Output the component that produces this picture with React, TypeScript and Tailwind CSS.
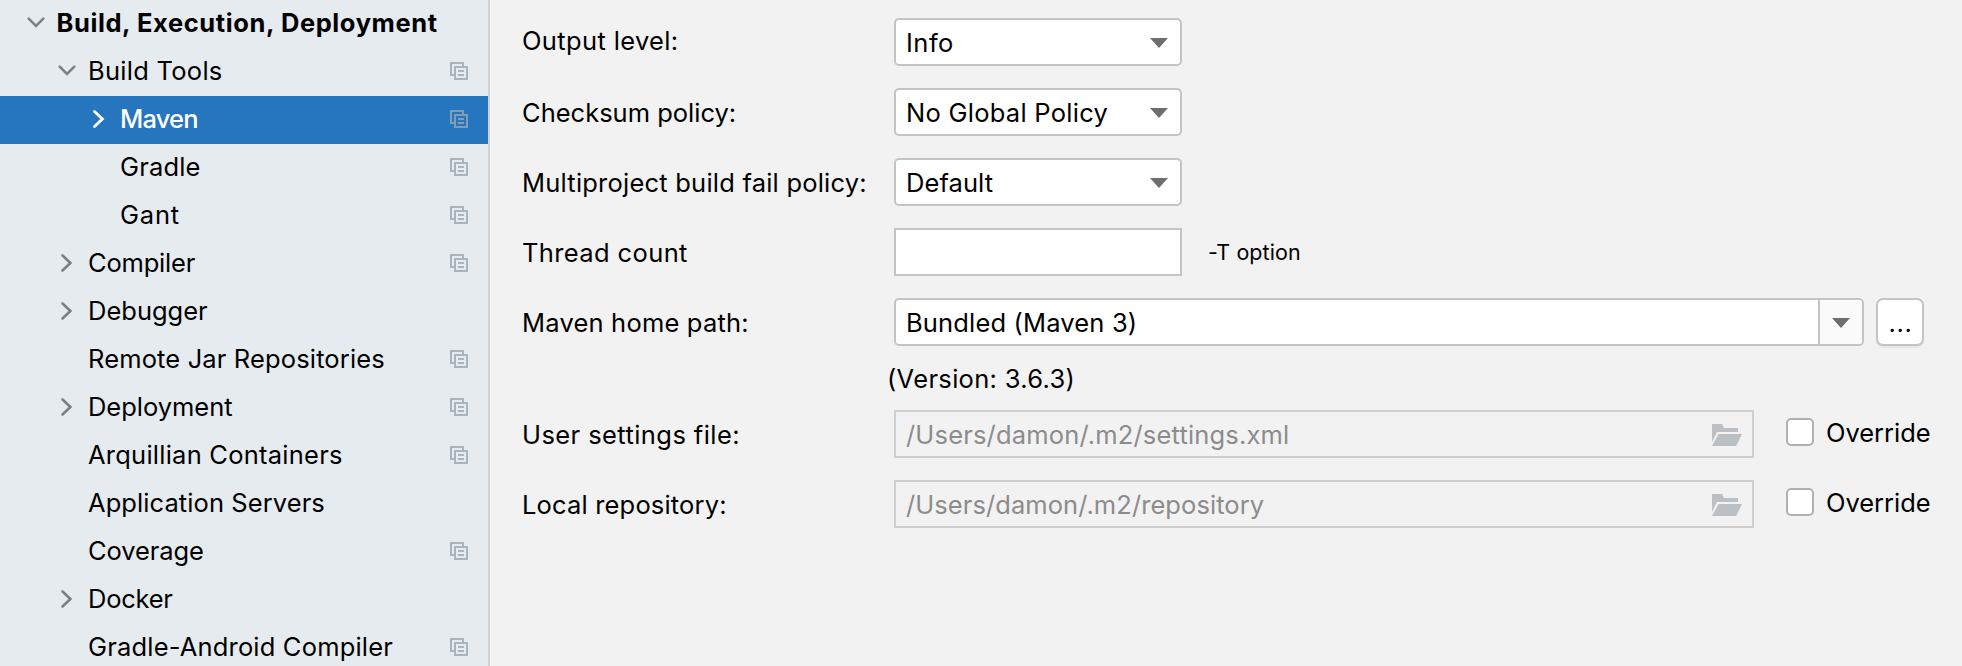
import type { ReactNode } from "react";

type Row = {
  label: string;
  indent: string;
  spacing: string;
  arrow?: "down" | "right";
  copy?: boolean;
  bold?: boolean;
  selected?: boolean;
};

const rows: Row[] = [
  { label: "Build, Execution, Deployment", indent: "pl-[24.5px]", spacing: "tracking-[0.59px]", arrow: "down", bold: true },
  { label: "Build Tools", indent: "pl-[56px]", spacing: "tracking-[0.27px]", arrow: "down", copy: true },
  { label: "Maven", indent: "pl-[88px]", spacing: "tracking-[-0.8px]", arrow: "right", copy: true, selected: true },
  { label: "Gradle", indent: "pl-[88px]", spacing: "tracking-[0.15px]", copy: true },
  { label: "Gant", indent: "pl-[88px]", spacing: "tracking-[0.8px]", copy: true },
  { label: "Compiler", indent: "pl-[56px]", spacing: "tracking-[-0.2px]", arrow: "right", copy: true },
  { label: "Debugger", indent: "pl-[56px]", spacing: "tracking-[0px]", arrow: "right" },
  { label: "Remote Jar Repositories", indent: "pl-[56px]", spacing: "tracking-[0.14px]", copy: true },
  { label: "Deployment", indent: "pl-[56px]", spacing: "tracking-[-0.03px]", arrow: "right", copy: true },
  { label: "Arquillian Containers", indent: "pl-[56px]", spacing: "tracking-[0.24px]", copy: true },
  { label: "Application Servers", indent: "pl-[56px]", spacing: "tracking-[0.08px]" },
  { label: "Coverage", indent: "pl-[56px]", spacing: "tracking-[-0.1px]", copy: true },
  { label: "Docker", indent: "pl-[56px]", spacing: "tracking-[-0.25px]", arrow: "right" },
  { label: "Gradle-Android Compiler", indent: "pl-[56px]", spacing: "tracking-[0.18px]", copy: true },
];

function Chevron({ dir, selected }: { dir?: "down" | "right"; selected?: boolean }) {
  return (
    <svg
      className={`h-[48px] w-[32px] shrink-0 ${selected ? "text-white" : "text-[#7f8081]"}`}
      viewBox="0 0 32 48"
      fill="none"
      stroke="currentColor"
      strokeWidth={selected ? 2.8 : 2.6}
      strokeLinecap="round"
    >
      {dir === "down" && <path d="M3.7 18.7 11 26l7.300-7.300" />}
      {dir === "right" && <path d="M6.500 15.500 14.400 23l-7.900 7.500" />}
    </svg>
  );
}

function CopyIcon() {
  return (
    <svg className="mr-[20px] h-[18px] w-[18px] shrink-0 opacity-80" viewBox="0 0 18 18" fill="#9aa7b0">
      <path d="M0 0h14v4h-2V2H2v10h2v2H0z" />
      <path fillRule="evenodd" d="M4 4h14v14H4zM6 6v10h10V6z" />
      <path d="M8 8h6v2H8zM8 12h6v2H8z" />
    </svg>
  );
}

function Caret() {
  return (
    <svg className="mt-[2px] h-[10px] w-[18px] shrink-0" viewBox="0 0 18 10">
      <path d="M0 0h18L9 10z" fill="#6e6e6e" />
    </svg>
  );
}

function Folder() {
  return (
    <svg className="mr-[10px] h-[22px] w-[30px] shrink-0" viewBox="0 0 30 22" fill="#bac0c4">
      <path d="M0 0h10l2 4h14v4H5L0 18z" />
      <path d="M6.500 10H30l-5.800 12H0z" />
    </svg>
  );
}

function Label({ children, spacing, raised }: { children: ReactNode; spacing: string; raised?: boolean }) {
  return (
    <div className={`w-[372px] shrink-0 ${spacing} ${raised ? "leading-[46px]" : "leading-[50px]"}`}>
      {children}
    </div>
  );
}

function Select({ value, spacing }: { value: string; spacing: string }) {
  return (
    <div className="flex h-[48px] w-[288px] items-center justify-between rounded-[5px] border-2 border-[#c4c4c4] bg-white pr-[12px] pl-[10px]">
      <span className={`pt-[2px] leading-[44px] ${spacing}`}>{value}</span>
      <Caret />
    </div>
  );
}

function PathRow({ label, labelSpacing, value, valueSpacing }: { label: string; labelSpacing: string; value: string; valueSpacing: string }) {
  return (
    <div className="flex h-[48px]">
      <Label spacing={labelSpacing}>{label}</Label>
      <div className="flex h-[48px] w-[860px] shrink-0 items-center justify-between border-2 border-[#cfcfcf] pl-[10px] text-[#8c8c8c]">
        <span className={`pt-[2px] leading-[44px] ${valueSpacing}`}>{value}</span>
        <div className="pt-[2px]">
          <Folder />
        </div>
      </div>
      <label className="ml-[32px] flex h-[44px] items-center gap-[12px]">
        <span className="h-[28px] w-[28px] rounded-[5px] border-2 border-[#b0b0b0] bg-white" />
        <span className="pt-[2px] leading-[44px] tracking-[-0.04px]">Override</span>
      </label>
    </div>
  );
}

export default function App() {
  return (
    <div className="flex h-[666px] w-[1962px] overflow-hidden bg-[#f2f2f2] font-['Inter',sans-serif] text-[25.5px] whitespace-nowrap text-black">
      <nav className="w-[490px] shrink-0 border-r-2 border-[#d1d1d1] bg-[#e6ebef]">
        {rows.map((r) => (
          <div
            key={r.label}
            className={`flex h-[48px] items-center ${r.indent} ${r.selected ? "bg-[#2675bf] text-white" : ""}`}
          >
            <Chevron dir={r.arrow} selected={r.selected} />
            <span className={`grow pb-[2px] leading-[44px] ${r.spacing} ${r.bold ? "font-bold" : ""} ${r.selected ? "font-medium" : ""}`}>
              {r.label}
            </span>
            {r.copy && (
              <div className="pb-[2px]">
                <CopyIcon />
              </div>
            )}
          </div>
        ))}
      </nav>
      <main className="flex grow flex-col pt-[18px] pl-[32px]">
        <div className="flex flex-col gap-[22px]">
          <div className="flex h-[48px]">
            <Label spacing="tracking-[0.36px]" raised>Output level:</Label>
            <Select value="Info" spacing="tracking-[0.5px]" />
          </div>
          <div className="flex h-[48px]">
            <Label spacing="tracking-[0px]">Checksum policy:</Label>
            <Select value="No Global Policy" spacing="tracking-[0.26px]" />
          </div>
          <div className="flex h-[48px]">
            <Label spacing="tracking-[0.22px]">Multiproject build fail policy:</Label>
            <Select value="Default" spacing="tracking-[0.08px]" />
          </div>
          <div className="flex h-[48px]">
            <Label spacing="tracking-[0.38px]">Thread count</Label>
            <div className="h-[48px] w-[288px] border-2 border-[#c4c4c4] bg-white" />
            <span className="ml-[26px] text-[21.5px] leading-[49px] tracking-[0.06px]">-T option</span>
          </div>
          <div className="flex h-[48px]">
            <Label spacing="tracking-[0.2px]">Maven home path:</Label>
            <div className="flex h-[48px] w-[970px] shrink-0 overflow-hidden rounded-[5px] border-2 border-[#c4c4c4] bg-white">
              <span className="grow pt-[1px] pl-[10px] leading-[44px] tracking-[0.16px]">Bundled (Maven 3)</span>
              <div className="flex w-[44px] items-center justify-center border-l-2 border-[#c4c4c4] bg-[#fafafa]">
                <Caret />
              </div>
            </div>
            <button className="ml-[12px] flex h-[48px] w-[48px] items-center justify-center rounded-[7px] border-2 border-[#c4c4c4] bg-white pt-[1px] pl-[1px] leading-[44px] tracking-[0.6px] shadow-[0_2px_0_#e6e6e6]">
              ...
            </button>
          </div>
        </div>
        <div className="flex h-[64px] items-center pt-[2px] pl-[365px]">
          <span className="tracking-[0.32px]">(Version: 3.6.3)</span>
        </div>
        <div className="flex flex-col gap-[22px]">
          <PathRow label="User settings file:" labelSpacing="tracking-[0.42px]" value="/Users/damon/.m2/settings.xml" valueSpacing="tracking-[0.17px]" />
          <PathRow label="Local repository:" labelSpacing="tracking-[0.17px]" value="/Users/damon/.m2/repository" valueSpacing="tracking-[0.07px]" />
        </div>
      </main>
    </div>
  );
}
